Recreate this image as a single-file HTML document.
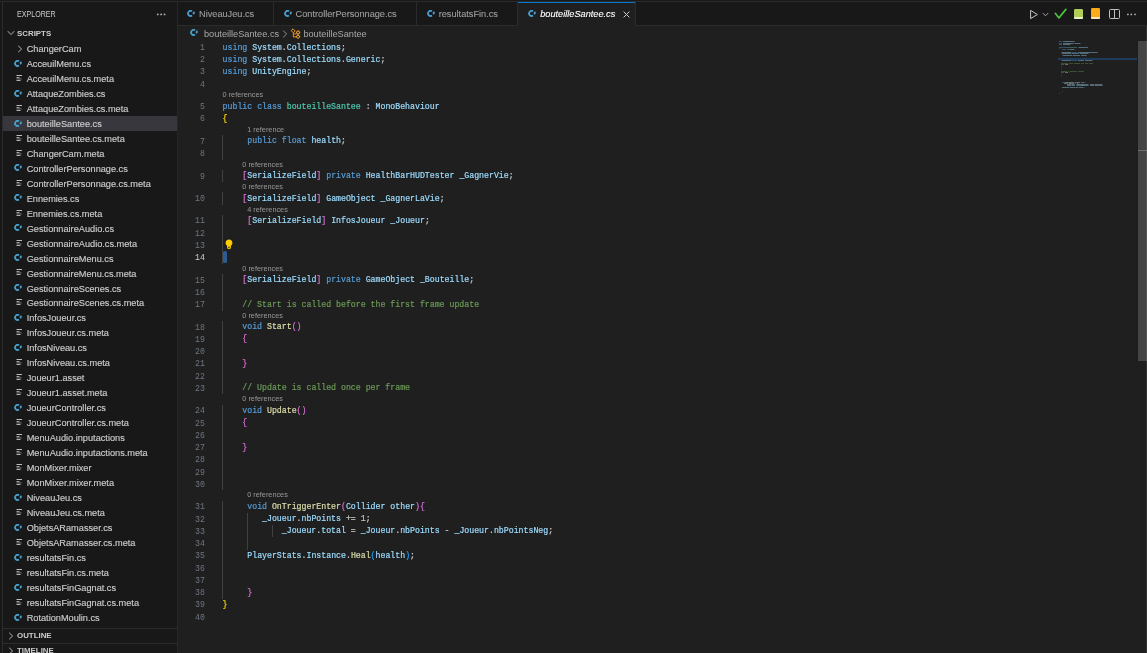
<!DOCTYPE html>
<html><head><meta charset="utf-8">
<style>
*{margin:0;padding:0;box-sizing:border-box}
#wrap{position:absolute;left:0;top:0;width:1147px;height:653px;will-change:transform;background:#181818;overflow:hidden}
html,body{width:1147px;height:653px;overflow:hidden;background:#181818}
body{position:relative;font-family:"Liberation Sans",sans-serif;color:#cccccc}
.abs{position:absolute}
#topb{position:absolute;left:0;top:1px;width:1147px;height:1px;background:#2b2b2b}
#leftb{position:absolute;left:2px;top:1px;width:1px;height:652px;background:#2b2b2b}
#side{position:absolute;left:3px;top:2px;width:174px;height:651px;background:#181818}
#sideb{position:absolute;left:177px;top:1px;width:1px;height:652px;background:#272727}
.title{position:absolute;left:16.8px;top:9.3px;font-size:8.5px;line-height:10px;color:#cccccc;transform:scaleX(0.834);transform-origin:0 0}
.hdr{position:absolute;font-size:7.9px;font-weight:bold;color:#cccccc;line-height:10px}
.row{position:absolute;left:3px;width:174px;height:14.97px}
.row.sel{background:#37373d}
.chev{position:absolute;display:block;line-height:0}
.fn{position:absolute;left:23.7px;top:0.7px;-webkit-text-stroke:0.15px #cccccc;font-size:9.2px;line-height:14.97px;color:#cccccc;white-space:pre}
#tabs{position:absolute;left:178px;top:2px;width:969px;height:23px;background:#181818}
#tabsb{position:absolute;left:178px;top:25px;width:969px;height:1px;background:#2b2b2b}
.tab{position:absolute;top:2px;height:23px;background:#181818}
.tabsep{position:absolute;top:2px;width:1px;height:23px;background:#2b2b2b}
.tt{position:absolute;top:1.2px;-webkit-text-stroke:0.12px currentColor;font-size:9.2px;line-height:23px;color:#9d9d9d;white-space:pre}
#editor{position:absolute;left:178px;top:26px;width:969px;height:627px;background:#1f1f1f}
.num{position:absolute;margin-top:-0.6px;left:178px;width:26.9px;text-align:right;font-family:"Liberation Mono",monospace;font-size:8.22px;line-height:12.255px;height:12.255px;color:#6e7681}
.num.act{color:#cccccc}
.ln{position:absolute;margin-top:-1px;-webkit-text-stroke-width:0.2px;left:222.6px;font-family:"Liberation Mono",monospace;font-size:8.22px;line-height:12.255px;height:12.255px;white-space:pre;color:#cccccc}
.cl{position:absolute;margin-top:-1.3px;font-size:7.3px;line-height:10.19px;height:10.19px;color:#999999;white-space:pre}
.guide{position:absolute;width:1px;background:#404040}
.bc{position:absolute;top:28.5px;font-size:9.2px;line-height:11px;color:#a9a9a9;white-space:pre}
</style></head><body><div id="wrap">
<div id="topb"></div>
<div id="side"></div>
<div id="leftb"></div>
<div id="sideb"></div>
<div class="title">EXPLORER</div>
<svg class="abs" style="left:156px;top:12.5px" width="10" height="3" viewBox="0 0 10 3"><circle cx="1.8" cy="1.4" r="0.95" fill="#b0b0b0"/><circle cx="5.2" cy="1.4" r="0.95" fill="#b0b0b0"/><circle cx="8.55" cy="1.4" r="0.95" fill="#b0b0b0"/></svg>
<div class="abs" style="left:7px;top:30px;line-height:0"><svg width="8" height="6" viewBox="0 0 8 6"><path d="M0.8 1.2L4 4.6L7.2 1.2" fill="none" stroke="#c5c5c5" stroke-width="0.9"/></svg></div>
<div class="hdr" style="left:17px;top:28.6px">SCRIPTS</div>
<div class="row" style="top:41.30px"><span class="chev" style="left:14px;top:3.5px"><svg width="6" height="8" viewBox="0 0 6 8"><path d="M1.2 0.8L4.6 4L1.2 7.2" fill="none" stroke="#c5c5c5" stroke-width="0.9"/></svg></span><span class="fn">ChangerCam</span></div><div class="row" style="top:56.27px"><span class="chev" style="left:10.6px;top:3.4px"><svg width="9" height="8" viewBox="0 0 9 8"><path d="M5.03 1.35A2.5 2.5 0 1 0 5.03 5.45" fill="none" stroke="#4a9ecb" stroke-width="1.8"/><ellipse cx="6.75" cy="3.0" rx="1.05" ry="1.6" transform="rotate(15 6.75 3.0)" fill="#4a9ecb"/></svg></span><span class="fn">AcceuilMenu.cs</span></div><div class="row" style="top:71.24px"><span class="chev" style="left:13px;top:3.6px"><svg width="7" height="7" viewBox="0 0 7 7"><rect x="0.5" y="0" width="5.5" height="1" fill="#bdbdbd"/><rect x="0.5" y="2.1" width="3" height="1" fill="#b0b0b0"/><rect x="0.5" y="3.5" width="5" height="0.9" fill="#8a8a8a"/><rect x="0.5" y="5" width="4" height="1" fill="#b0b0b0"/></svg></span><span class="fn">AcceuilMenu.cs.meta</span></div><div class="row" style="top:86.21px"><span class="chev" style="left:10.6px;top:3.4px"><svg width="9" height="8" viewBox="0 0 9 8"><path d="M5.03 1.35A2.5 2.5 0 1 0 5.03 5.45" fill="none" stroke="#4a9ecb" stroke-width="1.8"/><ellipse cx="6.75" cy="3.0" rx="1.05" ry="1.6" transform="rotate(15 6.75 3.0)" fill="#4a9ecb"/></svg></span><span class="fn">AttaqueZombies.cs</span></div><div class="row" style="top:101.18px"><span class="chev" style="left:13px;top:3.6px"><svg width="7" height="7" viewBox="0 0 7 7"><rect x="0.5" y="0" width="5.5" height="1" fill="#bdbdbd"/><rect x="0.5" y="2.1" width="3" height="1" fill="#b0b0b0"/><rect x="0.5" y="3.5" width="5" height="0.9" fill="#8a8a8a"/><rect x="0.5" y="5" width="4" height="1" fill="#b0b0b0"/></svg></span><span class="fn">AttaqueZombies.cs.meta</span></div><div class="row sel" style="top:116.15px"><span class="chev" style="left:10.6px;top:3.4px"><svg width="9" height="8" viewBox="0 0 9 8"><path d="M5.03 1.35A2.5 2.5 0 1 0 5.03 5.45" fill="none" stroke="#4a9ecb" stroke-width="1.8"/><ellipse cx="6.75" cy="3.0" rx="1.05" ry="1.6" transform="rotate(15 6.75 3.0)" fill="#4a9ecb"/></svg></span><span class="fn">bouteilleSantee.cs</span></div><div class="row" style="top:131.12px"><span class="chev" style="left:13px;top:3.6px"><svg width="7" height="7" viewBox="0 0 7 7"><rect x="0.5" y="0" width="5.5" height="1" fill="#bdbdbd"/><rect x="0.5" y="2.1" width="3" height="1" fill="#b0b0b0"/><rect x="0.5" y="3.5" width="5" height="0.9" fill="#8a8a8a"/><rect x="0.5" y="5" width="4" height="1" fill="#b0b0b0"/></svg></span><span class="fn">bouteilleSantee.cs.meta</span></div><div class="row" style="top:146.09px"><span class="chev" style="left:13px;top:3.6px"><svg width="7" height="7" viewBox="0 0 7 7"><rect x="0.5" y="0" width="5.5" height="1" fill="#bdbdbd"/><rect x="0.5" y="2.1" width="3" height="1" fill="#b0b0b0"/><rect x="0.5" y="3.5" width="5" height="0.9" fill="#8a8a8a"/><rect x="0.5" y="5" width="4" height="1" fill="#b0b0b0"/></svg></span><span class="fn">ChangerCam.meta</span></div><div class="row" style="top:161.06px"><span class="chev" style="left:10.6px;top:3.4px"><svg width="9" height="8" viewBox="0 0 9 8"><path d="M5.03 1.35A2.5 2.5 0 1 0 5.03 5.45" fill="none" stroke="#4a9ecb" stroke-width="1.8"/><ellipse cx="6.75" cy="3.0" rx="1.05" ry="1.6" transform="rotate(15 6.75 3.0)" fill="#4a9ecb"/></svg></span><span class="fn">ControllerPersonnage.cs</span></div><div class="row" style="top:176.03px"><span class="chev" style="left:13px;top:3.6px"><svg width="7" height="7" viewBox="0 0 7 7"><rect x="0.5" y="0" width="5.5" height="1" fill="#bdbdbd"/><rect x="0.5" y="2.1" width="3" height="1" fill="#b0b0b0"/><rect x="0.5" y="3.5" width="5" height="0.9" fill="#8a8a8a"/><rect x="0.5" y="5" width="4" height="1" fill="#b0b0b0"/></svg></span><span class="fn">ControllerPersonnage.cs.meta</span></div><div class="row" style="top:191.00px"><span class="chev" style="left:10.6px;top:3.4px"><svg width="9" height="8" viewBox="0 0 9 8"><path d="M5.03 1.35A2.5 2.5 0 1 0 5.03 5.45" fill="none" stroke="#4a9ecb" stroke-width="1.8"/><ellipse cx="6.75" cy="3.0" rx="1.05" ry="1.6" transform="rotate(15 6.75 3.0)" fill="#4a9ecb"/></svg></span><span class="fn">Ennemies.cs</span></div><div class="row" style="top:205.97px"><span class="chev" style="left:13px;top:3.6px"><svg width="7" height="7" viewBox="0 0 7 7"><rect x="0.5" y="0" width="5.5" height="1" fill="#bdbdbd"/><rect x="0.5" y="2.1" width="3" height="1" fill="#b0b0b0"/><rect x="0.5" y="3.5" width="5" height="0.9" fill="#8a8a8a"/><rect x="0.5" y="5" width="4" height="1" fill="#b0b0b0"/></svg></span><span class="fn">Ennemies.cs.meta</span></div><div class="row" style="top:220.94px"><span class="chev" style="left:10.6px;top:3.4px"><svg width="9" height="8" viewBox="0 0 9 8"><path d="M5.03 1.35A2.5 2.5 0 1 0 5.03 5.45" fill="none" stroke="#4a9ecb" stroke-width="1.8"/><ellipse cx="6.75" cy="3.0" rx="1.05" ry="1.6" transform="rotate(15 6.75 3.0)" fill="#4a9ecb"/></svg></span><span class="fn">GestionnaireAudio.cs</span></div><div class="row" style="top:235.91px"><span class="chev" style="left:13px;top:3.6px"><svg width="7" height="7" viewBox="0 0 7 7"><rect x="0.5" y="0" width="5.5" height="1" fill="#bdbdbd"/><rect x="0.5" y="2.1" width="3" height="1" fill="#b0b0b0"/><rect x="0.5" y="3.5" width="5" height="0.9" fill="#8a8a8a"/><rect x="0.5" y="5" width="4" height="1" fill="#b0b0b0"/></svg></span><span class="fn">GestionnaireAudio.cs.meta</span></div><div class="row" style="top:250.88px"><span class="chev" style="left:10.6px;top:3.4px"><svg width="9" height="8" viewBox="0 0 9 8"><path d="M5.03 1.35A2.5 2.5 0 1 0 5.03 5.45" fill="none" stroke="#4a9ecb" stroke-width="1.8"/><ellipse cx="6.75" cy="3.0" rx="1.05" ry="1.6" transform="rotate(15 6.75 3.0)" fill="#4a9ecb"/></svg></span><span class="fn">GestionnaireMenu.cs</span></div><div class="row" style="top:265.85px"><span class="chev" style="left:13px;top:3.6px"><svg width="7" height="7" viewBox="0 0 7 7"><rect x="0.5" y="0" width="5.5" height="1" fill="#bdbdbd"/><rect x="0.5" y="2.1" width="3" height="1" fill="#b0b0b0"/><rect x="0.5" y="3.5" width="5" height="0.9" fill="#8a8a8a"/><rect x="0.5" y="5" width="4" height="1" fill="#b0b0b0"/></svg></span><span class="fn">GestionnaireMenu.cs.meta</span></div><div class="row" style="top:280.82px"><span class="chev" style="left:10.6px;top:3.4px"><svg width="9" height="8" viewBox="0 0 9 8"><path d="M5.03 1.35A2.5 2.5 0 1 0 5.03 5.45" fill="none" stroke="#4a9ecb" stroke-width="1.8"/><ellipse cx="6.75" cy="3.0" rx="1.05" ry="1.6" transform="rotate(15 6.75 3.0)" fill="#4a9ecb"/></svg></span><span class="fn">GestionnaireScenes.cs</span></div><div class="row" style="top:295.79px"><span class="chev" style="left:13px;top:3.6px"><svg width="7" height="7" viewBox="0 0 7 7"><rect x="0.5" y="0" width="5.5" height="1" fill="#bdbdbd"/><rect x="0.5" y="2.1" width="3" height="1" fill="#b0b0b0"/><rect x="0.5" y="3.5" width="5" height="0.9" fill="#8a8a8a"/><rect x="0.5" y="5" width="4" height="1" fill="#b0b0b0"/></svg></span><span class="fn">GestionnaireScenes.cs.meta</span></div><div class="row" style="top:310.76px"><span class="chev" style="left:10.6px;top:3.4px"><svg width="9" height="8" viewBox="0 0 9 8"><path d="M5.03 1.35A2.5 2.5 0 1 0 5.03 5.45" fill="none" stroke="#4a9ecb" stroke-width="1.8"/><ellipse cx="6.75" cy="3.0" rx="1.05" ry="1.6" transform="rotate(15 6.75 3.0)" fill="#4a9ecb"/></svg></span><span class="fn">InfosJoueur.cs</span></div><div class="row" style="top:325.73px"><span class="chev" style="left:13px;top:3.6px"><svg width="7" height="7" viewBox="0 0 7 7"><rect x="0.5" y="0" width="5.5" height="1" fill="#bdbdbd"/><rect x="0.5" y="2.1" width="3" height="1" fill="#b0b0b0"/><rect x="0.5" y="3.5" width="5" height="0.9" fill="#8a8a8a"/><rect x="0.5" y="5" width="4" height="1" fill="#b0b0b0"/></svg></span><span class="fn">InfosJoueur.cs.meta</span></div><div class="row" style="top:340.70px"><span class="chev" style="left:10.6px;top:3.4px"><svg width="9" height="8" viewBox="0 0 9 8"><path d="M5.03 1.35A2.5 2.5 0 1 0 5.03 5.45" fill="none" stroke="#4a9ecb" stroke-width="1.8"/><ellipse cx="6.75" cy="3.0" rx="1.05" ry="1.6" transform="rotate(15 6.75 3.0)" fill="#4a9ecb"/></svg></span><span class="fn">InfosNiveau.cs</span></div><div class="row" style="top:355.67px"><span class="chev" style="left:13px;top:3.6px"><svg width="7" height="7" viewBox="0 0 7 7"><rect x="0.5" y="0" width="5.5" height="1" fill="#bdbdbd"/><rect x="0.5" y="2.1" width="3" height="1" fill="#b0b0b0"/><rect x="0.5" y="3.5" width="5" height="0.9" fill="#8a8a8a"/><rect x="0.5" y="5" width="4" height="1" fill="#b0b0b0"/></svg></span><span class="fn">InfosNiveau.cs.meta</span></div><div class="row" style="top:370.64px"><span class="chev" style="left:13px;top:3.6px"><svg width="7" height="7" viewBox="0 0 7 7"><rect x="0.5" y="0" width="5.5" height="1" fill="#bdbdbd"/><rect x="0.5" y="2.1" width="3" height="1" fill="#b0b0b0"/><rect x="0.5" y="3.5" width="5" height="0.9" fill="#8a8a8a"/><rect x="0.5" y="5" width="4" height="1" fill="#b0b0b0"/></svg></span><span class="fn">Joueur1.asset</span></div><div class="row" style="top:385.61px"><span class="chev" style="left:13px;top:3.6px"><svg width="7" height="7" viewBox="0 0 7 7"><rect x="0.5" y="0" width="5.5" height="1" fill="#bdbdbd"/><rect x="0.5" y="2.1" width="3" height="1" fill="#b0b0b0"/><rect x="0.5" y="3.5" width="5" height="0.9" fill="#8a8a8a"/><rect x="0.5" y="5" width="4" height="1" fill="#b0b0b0"/></svg></span><span class="fn">Joueur1.asset.meta</span></div><div class="row" style="top:400.58px"><span class="chev" style="left:10.6px;top:3.4px"><svg width="9" height="8" viewBox="0 0 9 8"><path d="M5.03 1.35A2.5 2.5 0 1 0 5.03 5.45" fill="none" stroke="#4a9ecb" stroke-width="1.8"/><ellipse cx="6.75" cy="3.0" rx="1.05" ry="1.6" transform="rotate(15 6.75 3.0)" fill="#4a9ecb"/></svg></span><span class="fn">JoueurController.cs</span></div><div class="row" style="top:415.55px"><span class="chev" style="left:13px;top:3.6px"><svg width="7" height="7" viewBox="0 0 7 7"><rect x="0.5" y="0" width="5.5" height="1" fill="#bdbdbd"/><rect x="0.5" y="2.1" width="3" height="1" fill="#b0b0b0"/><rect x="0.5" y="3.5" width="5" height="0.9" fill="#8a8a8a"/><rect x="0.5" y="5" width="4" height="1" fill="#b0b0b0"/></svg></span><span class="fn">JoueurController.cs.meta</span></div><div class="row" style="top:430.52px"><span class="chev" style="left:13px;top:3.6px"><svg width="7" height="7" viewBox="0 0 7 7"><rect x="0.5" y="0" width="5.5" height="1" fill="#bdbdbd"/><rect x="0.5" y="2.1" width="3" height="1" fill="#b0b0b0"/><rect x="0.5" y="3.5" width="5" height="0.9" fill="#8a8a8a"/><rect x="0.5" y="5" width="4" height="1" fill="#b0b0b0"/></svg></span><span class="fn">MenuAudio.inputactions</span></div><div class="row" style="top:445.49px"><span class="chev" style="left:13px;top:3.6px"><svg width="7" height="7" viewBox="0 0 7 7"><rect x="0.5" y="0" width="5.5" height="1" fill="#bdbdbd"/><rect x="0.5" y="2.1" width="3" height="1" fill="#b0b0b0"/><rect x="0.5" y="3.5" width="5" height="0.9" fill="#8a8a8a"/><rect x="0.5" y="5" width="4" height="1" fill="#b0b0b0"/></svg></span><span class="fn">MenuAudio.inputactions.meta</span></div><div class="row" style="top:460.46px"><span class="chev" style="left:13px;top:3.6px"><svg width="7" height="7" viewBox="0 0 7 7"><rect x="0.5" y="0" width="5.5" height="1" fill="#bdbdbd"/><rect x="0.5" y="2.1" width="3" height="1" fill="#b0b0b0"/><rect x="0.5" y="3.5" width="5" height="0.9" fill="#8a8a8a"/><rect x="0.5" y="5" width="4" height="1" fill="#b0b0b0"/></svg></span><span class="fn">MonMixer.mixer</span></div><div class="row" style="top:475.43px"><span class="chev" style="left:13px;top:3.6px"><svg width="7" height="7" viewBox="0 0 7 7"><rect x="0.5" y="0" width="5.5" height="1" fill="#bdbdbd"/><rect x="0.5" y="2.1" width="3" height="1" fill="#b0b0b0"/><rect x="0.5" y="3.5" width="5" height="0.9" fill="#8a8a8a"/><rect x="0.5" y="5" width="4" height="1" fill="#b0b0b0"/></svg></span><span class="fn">MonMixer.mixer.meta</span></div><div class="row" style="top:490.40px"><span class="chev" style="left:10.6px;top:3.4px"><svg width="9" height="8" viewBox="0 0 9 8"><path d="M5.03 1.35A2.5 2.5 0 1 0 5.03 5.45" fill="none" stroke="#4a9ecb" stroke-width="1.8"/><ellipse cx="6.75" cy="3.0" rx="1.05" ry="1.6" transform="rotate(15 6.75 3.0)" fill="#4a9ecb"/></svg></span><span class="fn">NiveauJeu.cs</span></div><div class="row" style="top:505.37px"><span class="chev" style="left:13px;top:3.6px"><svg width="7" height="7" viewBox="0 0 7 7"><rect x="0.5" y="0" width="5.5" height="1" fill="#bdbdbd"/><rect x="0.5" y="2.1" width="3" height="1" fill="#b0b0b0"/><rect x="0.5" y="3.5" width="5" height="0.9" fill="#8a8a8a"/><rect x="0.5" y="5" width="4" height="1" fill="#b0b0b0"/></svg></span><span class="fn">NiveauJeu.cs.meta</span></div><div class="row" style="top:520.34px"><span class="chev" style="left:10.6px;top:3.4px"><svg width="9" height="8" viewBox="0 0 9 8"><path d="M5.03 1.35A2.5 2.5 0 1 0 5.03 5.45" fill="none" stroke="#4a9ecb" stroke-width="1.8"/><ellipse cx="6.75" cy="3.0" rx="1.05" ry="1.6" transform="rotate(15 6.75 3.0)" fill="#4a9ecb"/></svg></span><span class="fn">ObjetsARamasser.cs</span></div><div class="row" style="top:535.31px"><span class="chev" style="left:13px;top:3.6px"><svg width="7" height="7" viewBox="0 0 7 7"><rect x="0.5" y="0" width="5.5" height="1" fill="#bdbdbd"/><rect x="0.5" y="2.1" width="3" height="1" fill="#b0b0b0"/><rect x="0.5" y="3.5" width="5" height="0.9" fill="#8a8a8a"/><rect x="0.5" y="5" width="4" height="1" fill="#b0b0b0"/></svg></span><span class="fn">ObjetsARamasser.cs.meta</span></div><div class="row" style="top:550.28px"><span class="chev" style="left:10.6px;top:3.4px"><svg width="9" height="8" viewBox="0 0 9 8"><path d="M5.03 1.35A2.5 2.5 0 1 0 5.03 5.45" fill="none" stroke="#4a9ecb" stroke-width="1.8"/><ellipse cx="6.75" cy="3.0" rx="1.05" ry="1.6" transform="rotate(15 6.75 3.0)" fill="#4a9ecb"/></svg></span><span class="fn">resultatsFin.cs</span></div><div class="row" style="top:565.25px"><span class="chev" style="left:13px;top:3.6px"><svg width="7" height="7" viewBox="0 0 7 7"><rect x="0.5" y="0" width="5.5" height="1" fill="#bdbdbd"/><rect x="0.5" y="2.1" width="3" height="1" fill="#b0b0b0"/><rect x="0.5" y="3.5" width="5" height="0.9" fill="#8a8a8a"/><rect x="0.5" y="5" width="4" height="1" fill="#b0b0b0"/></svg></span><span class="fn">resultatsFin.cs.meta</span></div><div class="row" style="top:580.22px"><span class="chev" style="left:10.6px;top:3.4px"><svg width="9" height="8" viewBox="0 0 9 8"><path d="M5.03 1.35A2.5 2.5 0 1 0 5.03 5.45" fill="none" stroke="#4a9ecb" stroke-width="1.8"/><ellipse cx="6.75" cy="3.0" rx="1.05" ry="1.6" transform="rotate(15 6.75 3.0)" fill="#4a9ecb"/></svg></span><span class="fn">resultatsFinGagnat.cs</span></div><div class="row" style="top:595.19px"><span class="chev" style="left:13px;top:3.6px"><svg width="7" height="7" viewBox="0 0 7 7"><rect x="0.5" y="0" width="5.5" height="1" fill="#bdbdbd"/><rect x="0.5" y="2.1" width="3" height="1" fill="#b0b0b0"/><rect x="0.5" y="3.5" width="5" height="0.9" fill="#8a8a8a"/><rect x="0.5" y="5" width="4" height="1" fill="#b0b0b0"/></svg></span><span class="fn">resultatsFinGagnat.cs.meta</span></div><div class="row" style="top:610.16px"><span class="chev" style="left:10.6px;top:3.4px"><svg width="9" height="8" viewBox="0 0 9 8"><path d="M5.03 1.35A2.5 2.5 0 1 0 5.03 5.45" fill="none" stroke="#4a9ecb" stroke-width="1.8"/><ellipse cx="6.75" cy="3.0" rx="1.05" ry="1.6" transform="rotate(15 6.75 3.0)" fill="#4a9ecb"/></svg></span><span class="fn">RotationMoulin.cs</span></div>
<div class="abs" style="left:3px;top:628px;width:174px;height:1px;background:#2b2b2b"></div>
<div class="abs" style="left:8px;top:632px;line-height:0"><svg width="6" height="8" viewBox="0 0 6 8"><path d="M1.2 0.8L4.6 4L1.2 7.2" fill="none" stroke="#c5c5c5" stroke-width="0.9"/></svg></div>
<div class="hdr" style="left:17px;top:630.5px">OUTLINE</div>
<div class="abs" style="left:3px;top:643px;width:174px;height:1px;background:#2b2b2b"></div>
<div class="abs" style="left:8px;top:647px;line-height:0"><svg width="6" height="8" viewBox="0 0 6 8"><path d="M1.2 0.8L4.6 4L1.2 7.2" fill="none" stroke="#c5c5c5" stroke-width="0.9"/></svg></div>
<div class="hdr" style="left:17px;top:645.5px">TIMELINE</div>

<div id="tabs"></div>
<div id="tabsb"></div>
<div id="editor"></div>
<div class="tabsep" style="left:273px"></div><span class="chev" style="left:187px;top:9.5px"><svg width="9" height="8" viewBox="0 0 9 8"><path d="M5.03 1.35A2.5 2.5 0 1 0 5.03 5.45" fill="none" stroke="#4a9ecb" stroke-width="1.8"/><ellipse cx="6.75" cy="3.0" rx="1.05" ry="1.6" transform="rotate(15 6.75 3.0)" fill="#4a9ecb"/></svg></span><div class="tt" style="left:199px;top:3.2px;color:#9d9d9d;">NiveauJeu.cs</div><div class="tabsep" style="left:416px"></div><span class="chev" style="left:283.5px;top:9.5px"><svg width="9" height="8" viewBox="0 0 9 8"><path d="M5.03 1.35A2.5 2.5 0 1 0 5.03 5.45" fill="none" stroke="#4a9ecb" stroke-width="1.8"/><ellipse cx="6.75" cy="3.0" rx="1.05" ry="1.6" transform="rotate(15 6.75 3.0)" fill="#4a9ecb"/></svg></span><div class="tt" style="left:295.6px;top:3.2px;color:#9d9d9d;">ControllerPersonnage.cs</div><div class="tabsep" style="left:518px"></div><span class="chev" style="left:426.7px;top:9.5px"><svg width="9" height="8" viewBox="0 0 9 8"><path d="M5.03 1.35A2.5 2.5 0 1 0 5.03 5.45" fill="none" stroke="#4a9ecb" stroke-width="1.8"/><ellipse cx="6.75" cy="3.0" rx="1.05" ry="1.6" transform="rotate(15 6.75 3.0)" fill="#4a9ecb"/></svg></span><div class="tt" style="left:438.7px;top:3.2px;color:#9d9d9d;">resultatsFin.cs</div><div class="tabsep" style="left:517px"></div><div class="abs" style="left:518px;top:2px;width:117px;height:24px;background:#1f1f1f"></div><div class="abs" style="left:518px;top:2px;width:117px;height:1px;background:#0078d4"></div><div class="tabsep" style="left:635px"></div><span class="chev" style="left:528px;top:9.5px"><svg width="9" height="8" viewBox="0 0 9 8"><path d="M5.03 1.35A2.5 2.5 0 1 0 5.03 5.45" fill="none" stroke="#4a9ecb" stroke-width="1.8"/><ellipse cx="6.75" cy="3.0" rx="1.05" ry="1.6" transform="rotate(15 6.75 3.0)" fill="#4a9ecb"/></svg></span><div class="tt" style="left:540.2px;top:3.2px;color:#ffffff;font-style:italic;">bouteilleSantee.cs</div><svg class="abs" style="left:622.5px;top:10.8px" width="7" height="7" viewBox="0 0 7 7"><path d="M0.6 0.6L6.4 6.4M6.4 0.6L0.6 6.4" stroke="#cccccc" stroke-width="1"/></svg>
<div class="guide" style="left:222.00px;top:135.11px;height:24.51px"></div><div class="guide" style="left:222.00px;top:169.81px;height:12.25px"></div><div class="guide" style="left:222.00px;top:192.25px;height:12.25px"></div><div class="guide" style="left:222.00px;top:214.70px;height:49.02px"></div><div class="guide" style="left:222.00px;top:273.91px;height:36.76px"></div><div class="guide" style="left:222.00px;top:320.86px;height:73.53px"></div><div class="guide" style="left:222.00px;top:404.58px;height:85.78px"></div><div class="guide" style="left:222.00px;top:500.56px;height:98.04px"></div><div class="guide" style="left:247.00px;top:512.81px;height:36.76px"></div><div class="guide" style="left:272.00px;top:525.07px;height:12.25px"></div>
<div class="num" style="top:42.50px">1</div><div class="num" style="top:54.76px">2</div><div class="num" style="top:67.01px">3</div><div class="num" style="top:79.27px">4</div><div class="num" style="top:101.71px">5</div><div class="num" style="top:113.96px">6</div><div class="num" style="top:136.41px">7</div><div class="num" style="top:148.66px">8</div><div class="num" style="top:171.11px">9</div><div class="num" style="top:193.55px">10</div><div class="num" style="top:216.00px">11</div><div class="num" style="top:228.25px">12</div><div class="num" style="top:240.51px">13</div><div class="num act" style="top:252.76px">14</div><div class="num" style="top:275.21px">15</div><div class="num" style="top:287.46px">16</div><div class="num" style="top:299.72px">17</div><div class="num" style="top:322.16px">18</div><div class="num" style="top:334.42px">19</div><div class="num" style="top:346.67px">20</div><div class="num" style="top:358.93px">21</div><div class="num" style="top:371.18px">22</div><div class="num" style="top:383.44px">23</div><div class="num" style="top:405.88px">24</div><div class="num" style="top:418.14px">25</div><div class="num" style="top:430.39px">26</div><div class="num" style="top:442.65px">27</div><div class="num" style="top:454.90px">28</div><div class="num" style="top:467.16px">29</div><div class="num" style="top:479.41px">30</div><div class="num" style="top:501.86px">31</div><div class="num" style="top:514.11px">32</div><div class="num" style="top:526.37px">33</div><div class="num" style="top:538.62px">34</div><div class="num" style="top:550.88px">35</div><div class="num" style="top:563.13px">36</div><div class="num" style="top:575.39px">37</div><div class="num" style="top:587.64px">38</div><div class="num" style="top:599.90px">39</div><div class="num" style="top:612.15px">40</div>
<div class="ln" style="top:42.50px"><span style="color:#569cd6">using</span><span style="color:#cccccc"> </span><span style="color:#9cdcfe">System</span><span style="color:#cccccc">.</span><span style="color:#9cdcfe">Collections</span><span style="color:#cccccc">;</span></div><div class="ln" style="top:54.76px"><span style="color:#569cd6">using</span><span style="color:#cccccc"> </span><span style="color:#9cdcfe">System</span><span style="color:#cccccc">.</span><span style="color:#9cdcfe">Collections</span><span style="color:#cccccc">.</span><span style="color:#9cdcfe">Generic</span><span style="color:#cccccc">;</span></div><div class="ln" style="top:67.01px"><span style="color:#569cd6">using</span><span style="color:#cccccc"> </span><span style="color:#9cdcfe">UnityEngine</span><span style="color:#cccccc">;</span></div><div class="cl" style="top:91.52px;left:222.60px">0 references</div><div class="ln" style="top:101.71px"><span style="color:#569cd6">public</span><span style="color:#cccccc"> </span><span style="color:#569cd6">class</span><span style="color:#cccccc"> </span><span style="color:#4ec9b0">bouteilleSantee</span><span style="color:#cccccc"> : </span><span style="color:#9cdcfe">MonoBehaviour</span></div><div class="ln" style="top:113.96px"><span style="color:#ffd700">{</span></div><div class="cl" style="top:126.22px;left:247.25px">1 reference</div><div class="ln" style="top:136.41px"><span style="color:#cccccc">     </span><span style="color:#569cd6">public</span><span style="color:#cccccc"> </span><span style="color:#569cd6">float</span><span style="color:#cccccc"> </span><span style="color:#9cdcfe">health</span><span style="color:#cccccc">;</span></div><div class="cl" style="top:160.92px;left:242.32px">0 references</div><div class="ln" style="top:171.11px"><span style="color:#cccccc">    </span><span style="color:#da70d6">[</span><span style="color:#9cdcfe">SerializeField</span><span style="color:#da70d6">]</span><span style="color:#cccccc"> </span><span style="color:#569cd6">private</span><span style="color:#cccccc"> </span><span style="color:#9cdcfe">HealthBarHUDTester</span><span style="color:#cccccc"> </span><span style="color:#9cdcfe">_GagnerVie</span><span style="color:#cccccc">;</span></div><div class="cl" style="top:183.36px;left:242.32px">0 references</div><div class="ln" style="top:193.55px"><span style="color:#cccccc">    </span><span style="color:#da70d6">[</span><span style="color:#9cdcfe">SerializeField</span><span style="color:#da70d6">]</span><span style="color:#cccccc"> </span><span style="color:#9cdcfe">GameObject</span><span style="color:#cccccc"> </span><span style="color:#9cdcfe">_GagnerLaVie</span><span style="color:#cccccc">;</span></div><div class="cl" style="top:205.81px;left:247.25px">4 references</div><div class="ln" style="top:216.00px"><span style="color:#cccccc">     </span><span style="color:#da70d6">[</span><span style="color:#9cdcfe">SerializeField</span><span style="color:#da70d6">]</span><span style="color:#cccccc"> </span><span style="color:#9cdcfe">InfosJoueur</span><span style="color:#cccccc"> </span><span style="color:#9cdcfe">_Joueur</span><span style="color:#cccccc">;</span></div><div class="cl" style="top:265.02px;left:242.32px">0 references</div><div class="ln" style="top:275.21px"><span style="color:#cccccc">    </span><span style="color:#da70d6">[</span><span style="color:#9cdcfe">SerializeField</span><span style="color:#da70d6">]</span><span style="color:#cccccc"> </span><span style="color:#569cd6">private</span><span style="color:#cccccc"> </span><span style="color:#9cdcfe">GameObject</span><span style="color:#cccccc"> </span><span style="color:#9cdcfe">_Bouteille</span><span style="color:#cccccc">;</span></div><div class="ln" style="top:299.72px"><span style="color:#cccccc">    </span><span style="color:#6a9955">// Start is called before the first frame update</span></div><div class="cl" style="top:311.97px;left:242.32px">0 references</div><div class="ln" style="top:322.16px"><span style="color:#cccccc">    </span><span style="color:#569cd6">void</span><span style="color:#cccccc"> </span><span style="color:#dcdcaa">Start</span><span style="color:#da70d6">()</span></div><div class="ln" style="top:334.42px"><span style="color:#cccccc">    </span><span style="color:#da70d6">{</span></div><div class="ln" style="top:358.93px"><span style="color:#cccccc">    </span><span style="color:#da70d6">}</span></div><div class="ln" style="top:383.44px"><span style="color:#cccccc">    </span><span style="color:#6a9955">// Update is called once per frame</span></div><div class="cl" style="top:395.69px;left:242.32px">0 references</div><div class="ln" style="top:405.88px"><span style="color:#cccccc">    </span><span style="color:#569cd6">void</span><span style="color:#cccccc"> </span><span style="color:#dcdcaa">Update</span><span style="color:#da70d6">()</span></div><div class="ln" style="top:418.14px"><span style="color:#cccccc">    </span><span style="color:#da70d6">{</span></div><div class="ln" style="top:442.65px"><span style="color:#cccccc">    </span><span style="color:#da70d6">}</span></div><div class="cl" style="top:491.67px;left:247.25px">0 references</div><div class="ln" style="top:501.86px"><span style="color:#cccccc">     </span><span style="color:#569cd6">void</span><span style="color:#cccccc"> </span><span style="color:#dcdcaa">OnTriggerEnter</span><span style="color:#da70d6">(</span><span style="color:#9cdcfe">Collider</span><span style="color:#cccccc"> </span><span style="color:#9cdcfe">other</span><span style="color:#da70d6">)</span><span style="color:#da70d6">{</span></div><div class="ln" style="top:514.11px"><span style="color:#cccccc">        </span><span style="color:#9cdcfe">_Joueur</span><span style="color:#cccccc">.</span><span style="color:#9cdcfe">nbPoints</span><span style="color:#cccccc"> += </span><span style="color:#b5cea8">1</span><span style="color:#cccccc">;</span></div><div class="ln" style="top:526.37px"><span style="color:#cccccc">            </span><span style="color:#9cdcfe">_Joueur</span><span style="color:#cccccc">.</span><span style="color:#9cdcfe">total</span><span style="color:#cccccc"> = </span><span style="color:#9cdcfe">_Joueur</span><span style="color:#cccccc">.</span><span style="color:#9cdcfe">nbPoints</span><span style="color:#cccccc"> - </span><span style="color:#9cdcfe">_Joueur</span><span style="color:#cccccc">.</span><span style="color:#9cdcfe">nbPointsNeg</span><span style="color:#cccccc">;</span></div><div class="ln" style="top:550.88px"><span style="color:#cccccc">     </span><span style="color:#9cdcfe">PlayerStats</span><span style="color:#cccccc">.</span><span style="color:#9cdcfe">Instance</span><span style="color:#cccccc">.</span><span style="color:#dcdcaa">Heal</span><span style="color:#179fff">(</span><span style="color:#9cdcfe">health</span><span style="color:#179fff">)</span><span style="color:#cccccc">;</span></div><div class="ln" style="top:587.64px"><span style="color:#cccccc">     </span><span style="color:#da70d6">}</span></div><div class="ln" style="top:599.90px"><span style="color:#ffd700">}</span></div>
<span class="chev" style="left:190px;top:29.3px"><svg width="9" height="8" viewBox="0 0 9 8"><path d="M5.03 1.35A2.5 2.5 0 1 0 5.03 5.45" fill="none" stroke="#4a9ecb" stroke-width="1.8"/><ellipse cx="6.75" cy="3.0" rx="1.05" ry="1.6" transform="rotate(15 6.75 3.0)" fill="#4a9ecb"/></svg></span><div class="bc" style="left:204px">bouteilleSantee.cs</div><svg class="abs" style="left:282px;top:29.5px" width="6" height="8" viewBox="0 0 6 8"><path d="M1.2 0.6L4.6 4L1.2 7.4" fill="none" stroke="#a0a0a0" stroke-width="0.9"/></svg><span class="chev" style="left:290.2px;top:28px"><svg width="11" height="11" viewBox="0 0 11 11" fill="none" stroke="#ee9d28" stroke-width="1"><path d="M1.2 2.6L3.0 0.8L5.2 3.0L3.4 4.8Z"/><path d="M3.3 4.8V8.9H6.6M4.2 5.9H6.6"/><rect x="6.8" y="3.2" width="2.6" height="2.6" rx="0.4" transform="rotate(45 8.1 4.5)"/><rect x="6.8" y="7.4" width="2.6" height="2.6" rx="0.4" transform="rotate(45 8.1 8.7)"/></svg></span><div class="bc" style="left:303.4px">bouteilleSantee</div>
<div class="abs" style="left:1058px;top:58.39px;width:80px;height:1.4px;background:#1e3b5c"></div><div class="abs" style="left:1058.60px;top:41.15px;width:3.30px;height:1.1px;background:#569cd6;opacity:0.4"></div><div class="abs" style="left:1062.56px;top:41.15px;width:3.96px;height:1.1px;background:#9cdcfe;opacity:0.4"></div><div class="abs" style="left:1066.52px;top:41.15px;width:0.66px;height:1.1px;background:#cccccc;opacity:0.22"></div><div class="abs" style="left:1067.18px;top:41.15px;width:7.26px;height:1.1px;background:#9cdcfe;opacity:0.4"></div><div class="abs" style="left:1074.44px;top:41.15px;width:0.66px;height:1.1px;background:#cccccc;opacity:0.22"></div><div class="abs" style="left:1058.60px;top:42.50px;width:3.30px;height:1.1px;background:#569cd6;opacity:0.4"></div><div class="abs" style="left:1062.56px;top:42.50px;width:3.96px;height:1.1px;background:#9cdcfe;opacity:0.4"></div><div class="abs" style="left:1066.52px;top:42.50px;width:0.66px;height:1.1px;background:#cccccc;opacity:0.22"></div><div class="abs" style="left:1067.18px;top:42.50px;width:7.26px;height:1.1px;background:#9cdcfe;opacity:0.4"></div><div class="abs" style="left:1074.44px;top:42.50px;width:0.66px;height:1.1px;background:#cccccc;opacity:0.22"></div><div class="abs" style="left:1075.10px;top:42.50px;width:4.62px;height:1.1px;background:#9cdcfe;opacity:0.4"></div><div class="abs" style="left:1079.72px;top:42.50px;width:0.66px;height:1.1px;background:#cccccc;opacity:0.22"></div><div class="abs" style="left:1058.60px;top:43.86px;width:3.30px;height:1.1px;background:#569cd6;opacity:0.4"></div><div class="abs" style="left:1062.56px;top:43.86px;width:7.26px;height:1.1px;background:#9cdcfe;opacity:0.4"></div><div class="abs" style="left:1069.82px;top:43.86px;width:0.66px;height:1.1px;background:#cccccc;opacity:0.22"></div><div class="abs" style="left:1058.60px;top:46.56px;width:3.96px;height:1.1px;background:#569cd6;opacity:0.4"></div><div class="abs" style="left:1063.22px;top:46.56px;width:3.30px;height:1.1px;background:#569cd6;opacity:0.4"></div><div class="abs" style="left:1067.18px;top:46.56px;width:9.90px;height:1.1px;background:#4ec9b0;opacity:0.4"></div><div class="abs" style="left:1077.74px;top:46.56px;width:0.66px;height:1.1px;background:#cccccc;opacity:0.22"></div><div class="abs" style="left:1079.06px;top:46.56px;width:8.58px;height:1.1px;background:#9cdcfe;opacity:0.4"></div><div class="abs" style="left:1058.60px;top:47.91px;width:0.66px;height:1.1px;background:#ffd700;opacity:0.22"></div><div class="abs" style="left:1061.90px;top:49.27px;width:3.96px;height:1.1px;background:#569cd6;opacity:0.4"></div><div class="abs" style="left:1066.52px;top:49.27px;width:3.30px;height:1.1px;background:#569cd6;opacity:0.4"></div><div class="abs" style="left:1070.48px;top:49.27px;width:3.96px;height:1.1px;background:#9cdcfe;opacity:0.4"></div><div class="abs" style="left:1074.44px;top:49.27px;width:0.66px;height:1.1px;background:#cccccc;opacity:0.22"></div><div class="abs" style="left:1061.24px;top:51.97px;width:0.66px;height:1.1px;background:#da70d6;opacity:0.22"></div><div class="abs" style="left:1061.90px;top:51.97px;width:9.24px;height:1.1px;background:#9cdcfe;opacity:0.4"></div><div class="abs" style="left:1071.14px;top:51.97px;width:0.66px;height:1.1px;background:#da70d6;opacity:0.22"></div><div class="abs" style="left:1072.46px;top:51.97px;width:4.62px;height:1.1px;background:#569cd6;opacity:0.4"></div><div class="abs" style="left:1077.74px;top:51.97px;width:11.88px;height:1.1px;background:#9cdcfe;opacity:0.4"></div><div class="abs" style="left:1090.28px;top:51.97px;width:6.60px;height:1.1px;background:#9cdcfe;opacity:0.4"></div><div class="abs" style="left:1096.88px;top:51.97px;width:0.66px;height:1.1px;background:#cccccc;opacity:0.22"></div><div class="abs" style="left:1061.24px;top:53.33px;width:0.66px;height:1.1px;background:#da70d6;opacity:0.22"></div><div class="abs" style="left:1061.90px;top:53.33px;width:9.24px;height:1.1px;background:#9cdcfe;opacity:0.4"></div><div class="abs" style="left:1071.14px;top:53.33px;width:0.66px;height:1.1px;background:#da70d6;opacity:0.22"></div><div class="abs" style="left:1072.46px;top:53.33px;width:6.60px;height:1.1px;background:#9cdcfe;opacity:0.4"></div><div class="abs" style="left:1079.72px;top:53.33px;width:7.92px;height:1.1px;background:#9cdcfe;opacity:0.4"></div><div class="abs" style="left:1087.64px;top:53.33px;width:0.66px;height:1.1px;background:#cccccc;opacity:0.22"></div><div class="abs" style="left:1061.90px;top:54.68px;width:0.66px;height:1.1px;background:#da70d6;opacity:0.22"></div><div class="abs" style="left:1062.56px;top:54.68px;width:9.24px;height:1.1px;background:#9cdcfe;opacity:0.4"></div><div class="abs" style="left:1071.80px;top:54.68px;width:0.66px;height:1.1px;background:#da70d6;opacity:0.22"></div><div class="abs" style="left:1073.12px;top:54.68px;width:7.26px;height:1.1px;background:#9cdcfe;opacity:0.4"></div><div class="abs" style="left:1081.04px;top:54.68px;width:4.62px;height:1.1px;background:#9cdcfe;opacity:0.4"></div><div class="abs" style="left:1085.66px;top:54.68px;width:0.66px;height:1.1px;background:#cccccc;opacity:0.22"></div><div class="abs" style="left:1061.24px;top:60.09px;width:0.66px;height:1.1px;background:#da70d6;opacity:0.22"></div><div class="abs" style="left:1061.90px;top:60.09px;width:9.24px;height:1.1px;background:#9cdcfe;opacity:0.4"></div><div class="abs" style="left:1071.14px;top:60.09px;width:0.66px;height:1.1px;background:#da70d6;opacity:0.22"></div><div class="abs" style="left:1072.46px;top:60.09px;width:4.62px;height:1.1px;background:#569cd6;opacity:0.4"></div><div class="abs" style="left:1077.74px;top:60.09px;width:6.60px;height:1.1px;background:#9cdcfe;opacity:0.4"></div><div class="abs" style="left:1085.00px;top:60.09px;width:6.60px;height:1.1px;background:#9cdcfe;opacity:0.4"></div><div class="abs" style="left:1091.60px;top:60.09px;width:0.66px;height:1.1px;background:#cccccc;opacity:0.22"></div><div class="abs" style="left:1061.24px;top:62.80px;width:1.32px;height:1.1px;background:#6a9955;opacity:0.4"></div><div class="abs" style="left:1063.22px;top:62.80px;width:3.30px;height:1.1px;background:#6a9955;opacity:0.4"></div><div class="abs" style="left:1067.18px;top:62.80px;width:1.32px;height:1.1px;background:#6a9955;opacity:0.4"></div><div class="abs" style="left:1069.16px;top:62.80px;width:3.96px;height:1.1px;background:#6a9955;opacity:0.4"></div><div class="abs" style="left:1073.78px;top:62.80px;width:3.96px;height:1.1px;background:#6a9955;opacity:0.4"></div><div class="abs" style="left:1078.40px;top:62.80px;width:1.98px;height:1.1px;background:#6a9955;opacity:0.4"></div><div class="abs" style="left:1081.04px;top:62.80px;width:3.30px;height:1.1px;background:#6a9955;opacity:0.4"></div><div class="abs" style="left:1085.00px;top:62.80px;width:3.30px;height:1.1px;background:#6a9955;opacity:0.4"></div><div class="abs" style="left:1088.96px;top:62.80px;width:3.96px;height:1.1px;background:#6a9955;opacity:0.4"></div><div class="abs" style="left:1061.24px;top:64.15px;width:2.64px;height:1.1px;background:#569cd6;opacity:0.4"></div><div class="abs" style="left:1064.54px;top:64.15px;width:3.30px;height:1.1px;background:#dcdcaa;opacity:0.4"></div><div class="abs" style="left:1067.84px;top:64.15px;width:1.32px;height:1.1px;background:#da70d6;opacity:0.22"></div><div class="abs" style="left:1061.24px;top:65.50px;width:0.66px;height:1.1px;background:#da70d6;opacity:0.22"></div><div class="abs" style="left:1061.24px;top:68.21px;width:0.66px;height:1.1px;background:#da70d6;opacity:0.22"></div><div class="abs" style="left:1061.24px;top:70.92px;width:1.32px;height:1.1px;background:#6a9955;opacity:0.4"></div><div class="abs" style="left:1063.22px;top:70.92px;width:3.96px;height:1.1px;background:#6a9955;opacity:0.4"></div><div class="abs" style="left:1067.84px;top:70.92px;width:1.32px;height:1.1px;background:#6a9955;opacity:0.4"></div><div class="abs" style="left:1069.82px;top:70.92px;width:3.96px;height:1.1px;background:#6a9955;opacity:0.4"></div><div class="abs" style="left:1074.44px;top:70.92px;width:2.64px;height:1.1px;background:#6a9955;opacity:0.4"></div><div class="abs" style="left:1077.74px;top:70.92px;width:1.98px;height:1.1px;background:#6a9955;opacity:0.4"></div><div class="abs" style="left:1080.38px;top:70.92px;width:3.30px;height:1.1px;background:#6a9955;opacity:0.4"></div><div class="abs" style="left:1061.24px;top:72.27px;width:2.64px;height:1.1px;background:#569cd6;opacity:0.4"></div><div class="abs" style="left:1064.54px;top:72.27px;width:3.96px;height:1.1px;background:#dcdcaa;opacity:0.4"></div><div class="abs" style="left:1068.50px;top:72.27px;width:1.32px;height:1.1px;background:#da70d6;opacity:0.22"></div><div class="abs" style="left:1061.24px;top:73.62px;width:0.66px;height:1.1px;background:#da70d6;opacity:0.22"></div><div class="abs" style="left:1061.24px;top:76.33px;width:0.66px;height:1.1px;background:#da70d6;opacity:0.22"></div><div class="abs" style="left:1061.90px;top:81.74px;width:2.64px;height:1.1px;background:#569cd6;opacity:0.4"></div><div class="abs" style="left:1065.20px;top:81.74px;width:9.24px;height:1.1px;background:#dcdcaa;opacity:0.4"></div><div class="abs" style="left:1074.44px;top:81.74px;width:0.66px;height:1.1px;background:#da70d6;opacity:0.22"></div><div class="abs" style="left:1075.10px;top:81.74px;width:5.28px;height:1.1px;background:#9cdcfe;opacity:0.4"></div><div class="abs" style="left:1081.04px;top:81.74px;width:3.30px;height:1.1px;background:#9cdcfe;opacity:0.4"></div><div class="abs" style="left:1084.34px;top:81.74px;width:0.66px;height:1.1px;background:#da70d6;opacity:0.22"></div><div class="abs" style="left:1085.00px;top:81.74px;width:0.66px;height:1.1px;background:#da70d6;opacity:0.22"></div><div class="abs" style="left:1063.88px;top:83.09px;width:4.62px;height:1.1px;background:#9cdcfe;opacity:0.4"></div><div class="abs" style="left:1068.50px;top:83.09px;width:0.66px;height:1.1px;background:#cccccc;opacity:0.22"></div><div class="abs" style="left:1069.16px;top:83.09px;width:5.28px;height:1.1px;background:#9cdcfe;opacity:0.4"></div><div class="abs" style="left:1075.10px;top:83.09px;width:1.32px;height:1.1px;background:#cccccc;opacity:0.22"></div><div class="abs" style="left:1077.08px;top:83.09px;width:0.66px;height:1.1px;background:#b5cea8;opacity:0.4"></div><div class="abs" style="left:1077.74px;top:83.09px;width:0.66px;height:1.1px;background:#cccccc;opacity:0.22"></div><div class="abs" style="left:1066.52px;top:84.45px;width:4.62px;height:1.1px;background:#9cdcfe;opacity:0.4"></div><div class="abs" style="left:1071.14px;top:84.45px;width:0.66px;height:1.1px;background:#cccccc;opacity:0.22"></div><div class="abs" style="left:1071.80px;top:84.45px;width:3.30px;height:1.1px;background:#9cdcfe;opacity:0.4"></div><div class="abs" style="left:1075.76px;top:84.45px;width:0.66px;height:1.1px;background:#cccccc;opacity:0.22"></div><div class="abs" style="left:1077.08px;top:84.45px;width:4.62px;height:1.1px;background:#9cdcfe;opacity:0.4"></div><div class="abs" style="left:1081.70px;top:84.45px;width:0.66px;height:1.1px;background:#cccccc;opacity:0.22"></div><div class="abs" style="left:1082.36px;top:84.45px;width:5.28px;height:1.1px;background:#9cdcfe;opacity:0.4"></div><div class="abs" style="left:1088.30px;top:84.45px;width:0.66px;height:1.1px;background:#cccccc;opacity:0.22"></div><div class="abs" style="left:1089.62px;top:84.45px;width:4.62px;height:1.1px;background:#9cdcfe;opacity:0.4"></div><div class="abs" style="left:1094.24px;top:84.45px;width:0.66px;height:1.1px;background:#cccccc;opacity:0.22"></div><div class="abs" style="left:1094.90px;top:84.45px;width:7.26px;height:1.1px;background:#9cdcfe;opacity:0.4"></div><div class="abs" style="left:1102.16px;top:84.45px;width:0.66px;height:1.1px;background:#cccccc;opacity:0.22"></div><div class="abs" style="left:1061.90px;top:87.15px;width:7.26px;height:1.1px;background:#9cdcfe;opacity:0.4"></div><div class="abs" style="left:1069.16px;top:87.15px;width:0.66px;height:1.1px;background:#cccccc;opacity:0.22"></div><div class="abs" style="left:1069.82px;top:87.15px;width:5.28px;height:1.1px;background:#9cdcfe;opacity:0.4"></div><div class="abs" style="left:1075.10px;top:87.15px;width:0.66px;height:1.1px;background:#cccccc;opacity:0.22"></div><div class="abs" style="left:1075.76px;top:87.15px;width:2.64px;height:1.1px;background:#dcdcaa;opacity:0.4"></div><div class="abs" style="left:1078.40px;top:87.15px;width:0.66px;height:1.1px;background:#179fff;opacity:0.22"></div><div class="abs" style="left:1079.06px;top:87.15px;width:3.96px;height:1.1px;background:#9cdcfe;opacity:0.4"></div><div class="abs" style="left:1083.02px;top:87.15px;width:0.66px;height:1.1px;background:#179fff;opacity:0.22"></div><div class="abs" style="left:1083.68px;top:87.15px;width:0.66px;height:1.1px;background:#cccccc;opacity:0.22"></div><div class="abs" style="left:1061.90px;top:91.21px;width:0.66px;height:1.1px;background:#da70d6;opacity:0.22"></div><div class="abs" style="left:1058.60px;top:92.56px;width:0.66px;height:1.1px;background:#ffd700;opacity:0.22"></div>
<div class="abs" style="left:1137px;top:26px;width:1px;height:627px;background:#1c1d20"></div><div class="abs" style="left:1146px;top:26px;width:1px;height:627px;background:#333333"></div><div class="abs" style="left:1138px;top:41px;width:8px;height:320px;background:#454545"></div><div class="abs" style="left:1146px;top:41px;width:1px;height:320px;background:#585858"></div><div class="abs" style="left:1138px;top:150px;width:9px;height:1px;background:#707070"></div>
<svg class="abs" style="left:1029px;top:9px" width="10" height="11" viewBox="0 0 10 11"><path d="M1.6 1.4L8.4 5.5L1.6 9.6Z" fill="none" stroke="#c5c5c5" stroke-width="1" stroke-linejoin="round"/></svg><svg class="abs" style="left:1041.5px;top:12px" width="7" height="5" viewBox="0 0 7 5"><path d="M0.8 1L3.5 3.8L6.2 1" fill="none" stroke="#b0b0b0" stroke-width="0.9"/></svg><svg class="abs" style="left:1054px;top:8px" width="13" height="12" viewBox="0 0 13 12"><path d="M1.3 5.3L4.9 9.9L11.9 1.4" fill="none" stroke="#4cc13f" stroke-width="1.7" stroke-linecap="round" stroke-linejoin="round"/></svg><div class="abs" style="left:1073.6px;top:8.5px;width:9.2px;height:10.8px;background:#b0cd55;border-radius:1.2px;overflow:hidden"><div class="abs" style="left:0;top:8.3px;width:9.2px;height:2.5px;background:#e6efcc"></div></div><div class="abs" style="left:1091.3px;top:8.3px;width:9.1px;height:11px;background:#fbaa1c;border-radius:1.2px;overflow:hidden"><div class="abs" style="left:0;top:8.5px;width:9.1px;height:2.5px;background:#fde6bd"></div></div><svg class="abs" style="left:1109px;top:8px" width="12" height="12" viewBox="0 0 12 12"><rect x="0.5" y="1.5" width="10" height="9" rx="1" fill="none" stroke="#c0c0c0" stroke-width="1"/><path d="M5.5 1.5V10.5" stroke="#c0c0c0" stroke-width="1"/></svg><svg class="abs" style="left:1126px;top:12.5px" width="11" height="3" viewBox="0 0 11 3"><circle cx="1.9" cy="1.4" r="0.85" fill="#b5b5b5"/><circle cx="5.3" cy="1.4" r="0.85" fill="#b5b5b5"/><circle cx="9" cy="1.4" r="0.85" fill="#b5b5b5"/></svg>
<svg class="abs" style="left:224.6px;top:238.51px" width="8" height="11" viewBox="0 0 8 11"><path d="M4 0.6C2 0.6 0.6 2 0.6 3.9C0.6 5.3 1.5 6 2.1 6.9V8.6C2.1 9.6 2.8 10.2 4 10.2C5.2 10.2 5.9 9.6 5.9 8.6V6.9C6.5 6 7.4 5.3 7.4 3.9C7.4 2 6 0.6 4 0.6Z" fill="#ffcc00"/><ellipse cx="4" cy="8.4" rx="0.7" ry="0.9" fill="#1f1f1f"/></svg><div class="abs" style="left:223px;top:250.96px;width:4.2px;height:12.1px;background:#2d5c92;border-radius:1.5px"></div>
</div></body></html>
